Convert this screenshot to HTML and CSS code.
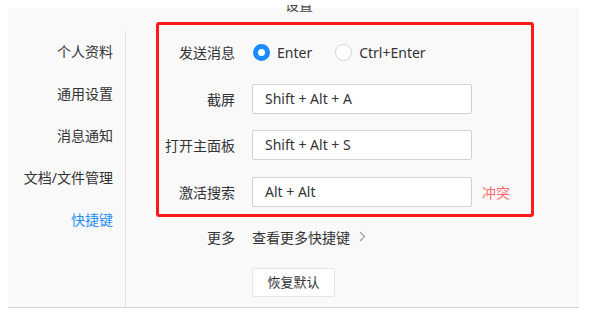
FILE: index.html
```html
<!DOCTYPE html>
<html lang="zh-CN">
<head>
<meta charset="utf-8">
<link rel="stylesheet" href="styles.css">
</head>
<body>
<div class="head">
  <div class="title"><span>设置</span></div>
</div>
<div class="panel">
  <nav class="sidebar">
    <div class="nav-item">个人资料</div>
    <div class="nav-item">通用设置</div>
    <div class="nav-item">消息通知</div>
    <div class="nav-item">文档/文件管理</div>
    <div class="nav-item active">快捷键</div>
  </nav>
  <main class="content">
    <section class="hotkeys">
      <div class="label">发送消息</div>
      <div class="radios">
        <label class="radio"><span class="dot checked"></span>Enter</label>
        <label class="radio"><span class="dot"></span>Ctrl+Enter</label>
      </div>
      <div></div>

      <div class="label">截屏</div>
      <div class="input">Shift + Alt + A</div>
      <div></div>

      <div class="label">打开主面板</div>
      <div class="input">Shift + Alt + S</div>
      <div></div>

      <div class="label">激活搜索</div>
      <div class="input">Alt + Alt</div>
      <div class="conflict">冲突</div>
    </section>
    <section class="extra">
      <div class="label">更多</div>
      <div class="more">查看更多快捷键<svg class="chev" width="7" height="11" viewBox="0 0 7 11"><path d="M1 1l4.5 4.5L1 10" fill="none" stroke="#9a9a9a" stroke-width="1.1"/></svg></div>
      <div></div>
      <div class="btn">恢复默认</div>
    </section>
  </main>
</div>
</body>
</html>
```
FILE: styles.css
```css
* { box-sizing: border-box; }
html, body { margin: 0; padding: 0; background: #fff; }
body {
  font-family: "Segoe UI", "Noto Sans", "Noto Sans CJK SC", sans-serif;
  font-size: 14px;
  color: #333;
  width: 589px;
  height: 318px;
  overflow: hidden;
}
.head { height: 8px; position: relative; }
.title {
  position: absolute;
  left: 285px;
  top: 5px;
  height: 7px;
  overflow: hidden;
  z-index: 1;
  font-size: 14px;
  line-height: 14px;
  color: #444;
}
.title span { display: block; margin-top: -7px; }
.panel {
  margin-left: 8px;
  width: 571px;
  height: 300px;
  background: #f9f9f9;
  border-bottom: 1px solid #d4d4d4;
  display: flex;
}
.sidebar {
  width: 118px;
  margin-top: 23px;
  border-right: 1px solid #e3e3e3;
  padding-right: 12px;
  text-align: right;
}
.nav-item { height: 42px; line-height: 42px; color: #333; white-space: nowrap; }
.nav-item.active { color: #2b8ef0; }
.content { padding-left: 30px; padding-top: 14px; }
.hotkeys {
  width: 378px;
  border: 3px solid #ff1a1a;
  border-radius: 3px;
  padding: 12px 0 7px 6px;
  display: grid;
  grid-template-columns: 70px 220px auto;
  grid-auto-rows: 30px;
  column-gap: 17px;
  row-gap: 16.5px;
  align-items: center;
}
.label { text-align: right; white-space: nowrap; color: #333; }
.radios { display: flex; align-items: center; gap: 23px; margin-left: 1px; }
.radio { display: flex; align-items: center; gap: 7px; color: #333; }
.dot {
  width: 17px; height: 17px; border-radius: 50%;
  background: #fff; border: 1px solid #d2d2d2;
  display: inline-block;
}
.dot.checked { border: 5px solid #1a8cff; }
.input {
  height: 30px;
  background: #fff;
  border: 1px solid #d2d2d2;
  border-radius: 2px;
  padding-left: 12px;
  line-height: 28px;
  color: #333;
}
.conflict { color: #ff6b6b; margin-left: -7px; }
.extra {
  display: grid;
  grid-template-columns: 71px auto;
  column-gap: 17px;
  padding-left: 8px;
  padding-top: 10px;
  row-gap: 21px;
  align-items: center;
}
.more { display: flex; align-items: center; gap: 9px; }
.chev { display: block; }
.btn {
  width: 83px;
  height: 29px;
  background: #fff;
  border: 1px solid #e6e6e6;
  border-radius: 2px;
  text-align: center;
  line-height: 27px;
  font-size: 13px;
}
```
